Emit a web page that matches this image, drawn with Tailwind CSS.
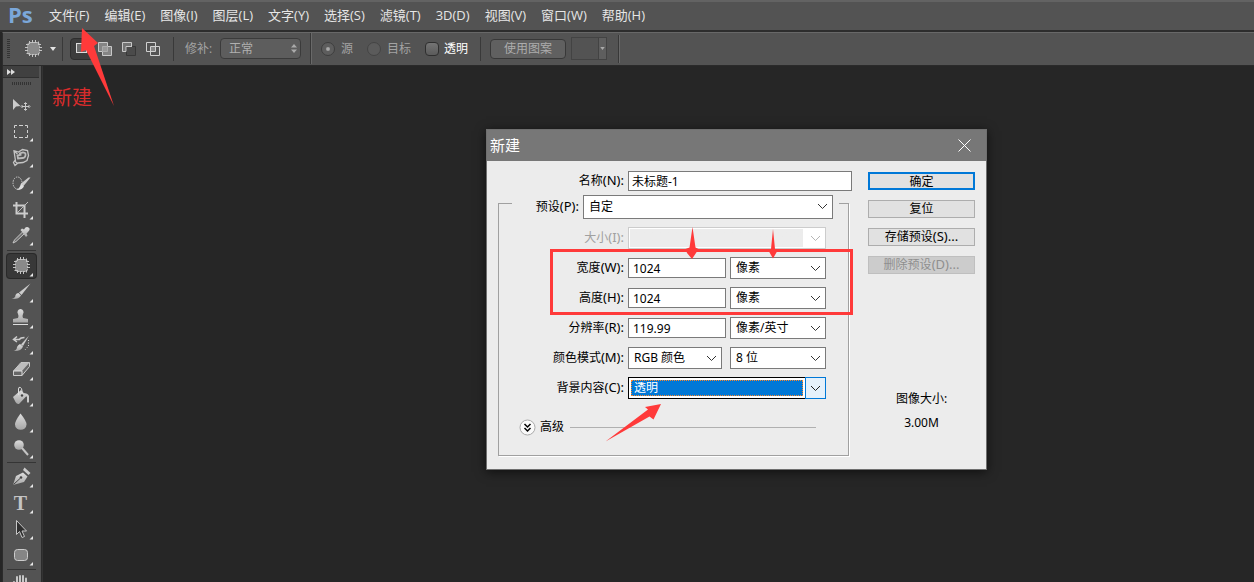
<!DOCTYPE html>
<html lang="zh-CN">
<head>
<meta charset="utf-8">
<title>Photoshop</title>
<script src="https://cdn.jsdelivr.net/npm/@tailwindcss/browser@4"></script>
</head>
<body class="flex h-screen flex-col overflow-hidden bg-[#262626] font-['Open_Sans','Noto_Sans_CJK_SC',sans-serif] text-xs text-[#e6e6e6]">
<svg class="absolute size-0" aria-hidden="true">
  <defs>
    <linearGradient id="metal" x1="0" y1="0" x2="0" y2="1"><stop offset="0" stop-color="#dedede"/><stop offset="1" stop-color="#a6a6a6"/></linearGradient>
    <symbol id="corner" viewBox="0 0 31 26"><path d="M27 20v3.500h-3.500z" fill="#e8e8e8"/></symbol>
    <symbol id="patch" viewBox="0 0 17 17">
      <rect x="2.500" y="2.500" width="12" height="12" rx="2.500" fill="#8a8a8a" stroke="#bdbdbd" stroke-dasharray="2 1"/>
      <path d="M4.500 1v3M7.500 0v3M10.500 0v3M13.500 1.500v2.500M4.500 13v3M7.500 14v3M10.500 14v3M13.500 13v2.500M1 4.500h3M0 7.500h3M0 10.500h3M1.500 13.500h2.500M13 4.500h3M14 7.500h3M14 10.500h3" stroke="#c4c4c4" fill="none"/>
    </symbol>
    <symbol id="chev" viewBox="0 0 11 7"><path d="M1 1l4.500 4.500L10 1" fill="none" stroke="currentColor"/></symbol>
  </defs>
</svg>

<nav class="flex h-8 shrink-0 items-center border-t-2 border-b-2 border-t-[#636363] border-b-[#2d2d2d] bg-[#535353] pb-px pl-2 text-[13px]">
  <span class="w-[41px] pb-1 font-['Open_Sans'] text-[22px] leading-6 font-bold text-[#7ba7d9]">Ps</span>
  <div class="flex gap-[15px] whitespace-nowrap">
    <button>文件(F)</button><button>编辑(E)</button><button>图像(I)</button><button>图层(L)</button><button>文字(Y)</button><button>选择(S)</button><button>滤镜(T)</button><button>3D(D)</button><button>视图(V)</button><button>窗口(W)</button><button>帮助(H)</button>
  </div>
</nav>

<div class="ml-[2px] flex h-[34px] shrink-0 items-center border-t border-b border-l border-t-[#686868] border-b-[#2a2a2a] border-l-[#2d2d2d] bg-[#535353] pb-px whitespace-nowrap text-[#a3a3a3]">
  <svg class="ml-1 h-5 w-[3px]" viewBox="0 0 3 20"><path d="M1.500 0v20" stroke="#333" stroke-width="3" stroke-dasharray="1 1"/></svg>
  <button class="ml-[15px] flex items-center gap-[8px]" aria-label="修补工具"><svg class="size-[17px]"><use href="#patch"/></svg><svg class="h-[4px] w-[6px]" viewBox="0 0 6 4"><path d="M0 0h6L3 4z" fill="#e4e4e4"/></svg></button>
  <span class="ml-[6px] h-6 w-px bg-[#393939]"></span>
  <div class="ml-[7px] flex items-center">
    <button aria-label="新选区" class="grid h-[22px] w-6 place-items-center rounded-sm border border-[#2e2e2e] bg-[#3c3c3c]"><svg class="size-[14px]" viewBox="0 0 14 14"><rect x="1.500" y="1.500" width="10" height="9" fill="#6b6b6b" stroke="#ddd"/></svg></button>
    <button aria-label="添加到选区" class="ml-[4px]"><svg class="size-[14px]" viewBox="0 0 14 14"><path d="M.5.5h9v4h4v9h-9v-4h-4z" fill="#858585" stroke="#c9c9c9"/><path d="M4.500 9.500v-5h5v5z" fill="#999" stroke="#aaa"/></svg></button>
    <button aria-label="从选区减去" class="ml-[10px]"><svg class="size-[14px]" viewBox="0 0 14 14"><path d="M4.500 4.500h9v9h-9z" fill="#4b4b4b" stroke="#383838"/><path d="M9.500 4V.5h-9v9H4v-5h6" fill="#747474" stroke="#c9c9c9"/></svg></button>
    <button aria-label="与选区交叉" class="ml-[10px]"><svg class="size-[14px]" viewBox="0 0 14 14"><path d="M.5.5h9v9h-9zM4.500 4.500h9v9h-9z" fill="none" stroke="#d0d0d0"/><path d="M5 5h4v4H5z" fill="#858585"/></svg></button>
  </div>
  <span class="ml-[13px] h-6 w-px bg-[#393939]"></span>
  <label for="mode" class="ml-[11px] w-[35px]">修补:</label>
  <div class="relative h-[21px] w-[81px]">
    <select id="mode" class="h-full w-full appearance-none rounded-sm border border-[#3b3b3b] bg-[#5d5d5d] pl-2 text-[#b0b0b0]"><option>正常</option></select>
    <svg class="pointer-events-none absolute top-[6px] right-1 h-[9px] w-[6px]" viewBox="0 0 6 9"><path d="M0 3.500L3 0l3 3.500zM0 5.500h6L3 9z" fill="#aaa"/></svg>
  </div>
  <span class="ml-[9px] h-[31px] w-[2px] border-l border-[#383838] bg-[#696969]"></span>
  <label class="ml-[9px] flex items-center gap-[6px]"><input type="radio" name="src" checked class="size-[14px] appearance-none rounded-full border border-[#3d3d3d] bg-[#5d5d5d] bg-radial from-[#aaa] from-15% to-[#5d5d5d] to-30%">源</label>
  <label class="ml-[14px] flex items-center gap-[6px]"><input type="radio" name="src" class="size-[14px] appearance-none rounded-full border border-[#444] bg-[#5b5b5b]">目标</label>
  <label class="ml-[14px] flex items-center gap-[5px] text-white"><input type="checkbox" class="size-[14px] appearance-none rounded-sm border border-[#2f2f2f] bg-linear-to-b from-[#747474] to-[#5b5b5b]">透明</label>
  <span class="ml-[12px] h-6 w-px bg-[#393939]"></span>
  <button class="ml-[9px] h-5 w-[76px] rounded-sm border border-[#383838] bg-[#606060] leading-none text-[#acacac]">使用图案</button>
  <button aria-label="图案" class="ml-[5px] flex h-[23px] w-[36px] justify-end border border-[#434343] bg-[#535353]"><span class="grid h-full w-[8px] place-items-center border-l border-[#434343] bg-[#5e5e5e]"><svg class="h-[3px] w-[5px]" viewBox="0 0 6 4"><path d="M0 0h6L3 4z" fill="#aaa"/></svg></span></button>
  <span class="ml-[11px] h-7 w-[2px] border-l border-[#383838] bg-[#696969]"></span>
</div>

<div class="flex min-h-0 flex-1">
  <aside class="ml-[2px] flex w-10 shrink-0 flex-col items-center overflow-hidden border-x border-[#2b2b2b] bg-[#535353] pr-[2px]">
    <button aria-label="展开" class="flex h-[12px] w-full shrink-0 items-center border-b border-[#303030] bg-[#404040] pl-1"><svg class="h-[6px] w-[8px]" viewBox="0 0 8 6"><path d="M0 0l4 3-4 3zM4 0l4 3-4 3z" fill="#ddd"/></svg></button>
    <svg class="mt-[4px] mb-[7px] h-[3px] w-[19px] shrink-0" viewBox="0 0 19 3"><path d="M0 1.500h19" stroke="#333" stroke-width="3" stroke-dasharray="1 1"/></svg>

    <button aria-label="移动"><svg class="block h-[26px] w-[31px]" viewBox="0 0 31 26"><path d="M7 7v11l3-3.500 4.500-.5z" fill="#ccc"/><path d="M16 14.500h7M19.500 11v7M18 12l1.500-1.500L21 12M18 17l1.500 1.500L21 17M16.500 13L15 14.500l1.500 1.500M22.500 13l1.500 1.500-1.500 1.500" fill="none" stroke="#c9c9c9"/></svg></button>
    <button aria-label="矩形选框"><svg class="block h-[26px] w-[31px]" viewBox="0 0 31 26"><path d="M8.500 10V7.500H11M13 7.500h4M19 7.500h2.500V10M21.500 12v3M21.500 17v2.500H19M17 19.500h-4M11 19.500H8.500V17M8.500 15v-3" fill="none" stroke="#d2d2d2"/><use href="#corner"/></svg></button>
    <button aria-label="磁性套索"><svg class="block h-[26px] w-[31px]" viewBox="0 0 31 26"><path d="M11.500 10L7.500 6.500l5 1.500 4-2.500 5 1 1 5-1.500 5-4 2-5 .5-3 2.500-1.500-3 1-1.500 2.500 2M8 7l1.500 10" fill="none" stroke="#c4c4c4" stroke-width="1.300"/><path d="M13 9.500l4-1.200q3 .3 2.500 3t-3 2.700l-4.500.5-.5-3 4-.8" fill="none" stroke="#bbb" stroke-width="1.800"/><use href="#corner"/></svg></button>
    <button aria-label="快速选择"><svg class="block h-[26px] w-[31px]" viewBox="0 0 31 26"><ellipse cx="11.500" cy="13" rx="4.500" ry="6" fill="none" stroke="#ccc" stroke-dasharray="1.500 1"/><path d="M24.500 7.500l-7 8.500-2.500-2.500 7.500-6z" fill="#ccc"/><path d="M15 13.500l3 2.500q-1.500 4.500-8 4 3.500-1 5-6.500z" fill="#dedede"/><use href="#corner"/></svg></button>
    <button aria-label="裁剪"><svg class="block h-[26px] w-[31px]" viewBox="0 0 31 26"><path d="M10.500 6v11.500H22M7 9.500h11.500V22" fill="none" stroke="#ccc" stroke-width="2"/><path d="M11 17L22 6" stroke="#bdbdbd"/><use href="#corner"/></svg></button>
    <button aria-label="吸管"><svg class="block h-[26px] w-[31px]" viewBox="0 0 31 26"><path d="M16.500 10l-8 8L7 21l3-1.500 8.500-8" fill="#6c6c6c" stroke="#c8c8c8"/><path d="M14.500 8l1.500-1.500 2 1Q20 4 22.500 5.500T22 10l-1.500 1.500 1 2L20 15z" fill="url(#metal)"/><use href="#corner"/></svg></button>
    <span class="my-[2px] h-px w-[29px] shrink-0 bg-[#353535]"></span>
    <button aria-label="修补" class="h-[26px] rounded-sm bg-[#383838] outline -outline-offset-1 outline-[#292929]"><svg class="block h-[26px] w-[31px]" viewBox="0 0 31 26"><use href="#patch" x="7" y="4" width="17" height="17"/><use href="#corner"/></svg></button>
    <button aria-label="画笔"><svg class="block h-[26px] w-[31px]" viewBox="0 0 31 26"><path d="M24.500 4.500L15.500 16 13 13.500z" fill="#ccc"/><path d="M12.500 14l2.500 2.500Q13 20.500 5.500 20q4-1 4-4 1-2 3-2z" fill="url(#metal)"/><use href="#corner"/></svg></button>
    <button aria-label="仿制图章"><svg class="block h-[26px] w-[31px]" viewBox="0 0 31 26"><path d="M14.500 4a3.200 3.200 0 0 1 2.500 5q-1 2 0 4l5 1v3.500H7V14l5-1q1-2 0-4a3.200 3.200 0 0 1 2.500-5z" fill="url(#metal)"/><path d="M7 19.500h15" stroke="#ddd"/><use href="#corner"/></svg></button>
    <button aria-label="历史记录画笔"><svg class="block h-[26px] w-[31px]" viewBox="0 0 31 26"><path d="M8 8.500h5.500q1-2 5-2M11 5.500L7.500 8.500 11 11" fill="none" stroke="#ccc" stroke-width="1.500"/><path d="M23 4.500L17 15l-2-1.500z" fill="#ccc"/><path d="M14 13l3 2.500q-2 5-9.500 4.500 3.500-1 3.500-4 1-2 3-3z" fill="url(#metal)"/><path d="M22.500 9v6l-4 4.500" fill="none" stroke="#ccc" stroke-dasharray="1 1.500"/><use href="#corner"/></svg></button>
    <button aria-label="橡皮擦"><svg class="block h-[26px] w-[31px]" viewBox="0 0 31 26"><path d="M7.500 14L15 5.500h8.500v4L16 18.500H7.500z" fill="#666" stroke="#ccc"/><path d="M7.500 14L15 5.500h8.500L16 14z" fill="#bdbdbd"/><path d="M7.500 14H16v4.500" fill="none" stroke="#ddd"/><use href="#corner"/></svg></button>
    <button aria-label="油漆桶"><svg class="block h-[26px] w-[31px]" viewBox="0 0 31 26"><path d="M7 14l8-7 5.500 6-7 7.500q-2 1.500-4-1.500z" fill="url(#metal)"/><path d="M12.500 12V6q0-2.500 2-1.500t1.500 8.500" fill="none" stroke="#ddd"/><path d="M17 10q5 0 6 3v6q-1 1.500-2 0v-5z" fill="#ccc"/><circle cx="16" cy="12.500" r="1.200" fill="#444"/><use href="#corner"/></svg></button>
    <button aria-label="模糊"><svg class="block h-[26px] w-[31px]" viewBox="0 0 31 26"><path d="M14.500 4.500Q9 12 9 15.500a5.500 5 0 0 0 11.500 0Q20.500 12 14.500 4.500z" fill="url(#metal)"/><use href="#corner"/></svg></button>
    <button aria-label="减淡"><svg class="block h-[26px] w-[31px]" viewBox="0 0 31 26"><circle cx="13" cy="10" r="4.800" fill="url(#metal)"/><path d="M16 13l6 7" stroke="#c4c4c4" stroke-width="2"/><use href="#corner"/></svg></button>
    <span class="my-[1px] h-px w-[29px] shrink-0 bg-[#353535]"></span>
    <button aria-label="钢笔"><svg class="block h-[26px] w-[31px]" viewBox="0 0 31 26"><path d="M7 21l3-9 7-3.500 4.500 4L18 18z" fill="url(#metal)"/><path d="M17 6l1.500-2.500 6 5.500L22.500 11z" fill="#ccc"/><path d="M7.500 20.500l6.500-6" stroke="#444"/><circle cx="15" cy="13.500" r="1.300" fill="#444"/><use href="#corner"/></svg></button>
    <button aria-label="横排文字" class="grid"><span class="col-start-1 row-start-1 pr-px text-center font-['Liberation_Serif'] text-xl leading-[26px] font-bold text-[#c4c4c4]">T</span><svg class="col-start-1 row-start-1 h-[26px] w-[31px]" viewBox="0 0 31 26"><use href="#corner"/></svg></button>
    <button aria-label="路径选择"><svg class="block h-[26px] w-[31px]" viewBox="0 0 31 26"><path d="M10.500 4.500v14l3-3 2.500 6 2.500-1-2.500-5.500h4.500z" fill="#2f2f2f" stroke="#c6c6c6"/><use href="#corner"/></svg></button>
    <button aria-label="圆角矩形"><svg class="block h-[26px] w-[31px]" viewBox="0 0 31 26"><rect x="8.500" y="7.500" width="13" height="11" rx="3" fill="#858585" stroke="#ccc"/><use href="#corner"/></svg></button>
    <span class="my-[1px] h-px w-[29px] shrink-0 bg-[#353535]"></span>
    <button aria-label="抓手"><svg class="block h-[26px] w-[31px]" viewBox="0 0 31 26"><path d="M11 14V6M14 13V5M17 13V5M20 14V7.500M8 11l4 5" stroke="#d4d4d4" stroke-width="1.800" stroke-linecap="round" fill="none"/><path d="M10 12h11v5l-3 5h-5l-4-7z" fill="#d0d0d0"/><use href="#corner"/></svg></button>
  </aside>
  <main class="flex-1 border-l border-[#333]"></main>
</div>

<!-- New document dialog -->
<section role="dialog" aria-labelledby="dlg-title" class="absolute top-[129px] left-[486px] w-[501px] border border-[#6f6f6f] bg-[#ececec] font-['Noto_Sans','Noto_Sans_CJK_SC',sans-serif] text-black shadow-[0_2px_10px_rgba(0,0,0,0.6)]">
  <header class="flex h-[31px] items-center justify-between bg-[#777] pr-[15px] pb-px pl-[3px] text-white">
    <h1 id="dlg-title" class="text-[15px]">新建</h1>
    <button aria-label="关闭"><svg class="size-[13px]" viewBox="0 0 13 13"><path d="M.5.5l12 12M12.500.5l-12 12" stroke="#fff"/></svg></button>
  </header>
  <form class="flex justify-between pt-[9px] pr-[11px] pb-[13px] pl-[11px]">
    <div class="w-[354px]">
      <div class="flex items-center">
        <label for="name" class="w-[130px] pr-1 text-right leading-5">名称<span class="text-[13px]">(N):</span></label>
        <input id="name" value="未标题-1" class="h-5 min-w-0 flex-1 border border-[#7a7a7a] bg-white px-[3px]">
      </div>
      <fieldset class="mt-1 mr-[3px] border border-[#a0a0a0] pb-[18px] shadow-[1px_1px_0_#fff]">
        <legend class="ml-[13px] h-4 w-[327px]">
          <div class="flex items-center">
            <label for="preset" class="w-[71px] pr-1 text-right">预设<span class="text-[13px]">(P):</span></label>
            <div class="relative h-6 w-[250px]"><select id="preset" class="h-full w-full appearance-none border border-[#7a7a7a] bg-white pl-[5px]"><option>自定</option></select><svg class="pointer-events-none absolute top-2 right-[5px] h-[7px] w-[11px] text-[#333]"><use href="#chev"/></svg></div>
          </div>
        </legend>
        <div class="mt-4 flex flex-col gap-2">
          <div class="flex h-[22px] items-center text-[#a0a0a0]">
            <label for="size" class="w-[129px] pr-1 text-right">大小<span class="text-[13px]">(I):</span></label>
            <div class="relative h-[22px] w-[198px]"><select id="size" disabled class="h-full w-full appearance-none border border-[#ccc] bg-linear-to-r from-[#ececec] from-[174px] to-white to-[174px] shadow-[inset_0_0_0_1px_#fff]"></select><svg class="pointer-events-none absolute top-2 right-[5px] h-[7px] w-[11px] text-[#b5b5b5]"><use href="#chev"/></svg></div>
          </div>
          <div class="flex h-[22px] items-center">
            <label for="w" class="w-[129px] pr-1 text-right">宽度<span class="text-[13px]">(W):</span></label>
            <input id="w" value="1024" class="h-5 w-[98px] border border-[#7a7a7a] bg-white px-1">
            <div class="relative ml-1 h-[22px] w-[96px]"><select aria-label="宽度单位" class="h-full w-full appearance-none border border-[#7a7a7a] bg-white pl-[5px]"><option>像素</option></select><svg class="pointer-events-none absolute top-2 right-[5px] h-[7px] w-[11px] text-[#333]"><use href="#chev"/></svg></div>
          </div>
          <div class="flex h-[22px] items-center">
            <label for="h" class="w-[129px] pr-1 text-right">高度<span class="text-[13px]">(H):</span></label>
            <input id="h" value="1024" class="h-5 w-[98px] border border-[#7a7a7a] bg-white px-1">
            <div class="relative ml-1 h-[22px] w-[96px]"><select aria-label="高度单位" class="h-full w-full appearance-none border border-[#7a7a7a] bg-white pl-[5px]"><option>像素</option></select><svg class="pointer-events-none absolute top-2 right-[5px] h-[7px] w-[11px] text-[#333]"><use href="#chev"/></svg></div>
          </div>
          <div class="flex h-[22px] items-center">
            <label for="res" class="w-[129px] pr-1 text-right">分辨率<span class="text-[13px]">(R):</span></label>
            <input id="res" value="119.99" class="h-5 w-[98px] border border-[#7a7a7a] bg-white px-1">
            <div class="relative ml-1 h-[22px] w-[96px]"><select aria-label="分辨率单位" class="h-full w-full appearance-none border border-[#7a7a7a] bg-white pl-[5px]"><option>像素/英寸</option></select><svg class="pointer-events-none absolute top-2 right-[5px] h-[7px] w-[11px] text-[#333]"><use href="#chev"/></svg></div>
          </div>
          <div class="flex h-[22px] items-center">
            <label for="cm" class="w-[129px] pr-1 text-right">颜色模式<span class="text-[13px]">(M):</span></label>
            <div class="relative h-[22px] w-[94px]"><select id="cm" class="h-full w-full appearance-none border border-[#7a7a7a] bg-white pl-[5px]"><option>RGB 颜色</option></select><svg class="pointer-events-none absolute top-2 right-[5px] h-[7px] w-[11px] text-[#333]"><use href="#chev"/></svg></div>
            <div class="relative ml-2 h-[22px] w-[96px]"><select aria-label="位深度" class="h-full w-full appearance-none border border-[#7a7a7a] bg-white pl-[5px]"><option>8 位</option></select><svg class="pointer-events-none absolute top-2 right-[5px] h-[7px] w-[11px] text-[#333]"><use href="#chev"/></svg></div>
          </div>
          <div class="flex h-[22px] items-center">
            <label for="bg" class="w-[129px] pr-1 text-right">背景内容<span class="text-[13px]">(C):</span></label>
            <div class="flex h-[22px] w-[177px] border border-r-0 border-black bg-white p-[2px]"><select id="bg" class="w-[172px] appearance-none border border-dotted border-[#ff8728] bg-[#0078d7] pl-[2px] leading-none text-white"><option>透明</option></select></div>
            <span class="grid h-[22px] w-[21px] place-items-center border border-[#0078d7] bg-[#e5f1fb]"><svg class="h-[7px] w-[11px] text-[#222]"><use href="#chev"/></svg></span>
          </div>
        </div>
        <div class="mt-[18px] mr-8 ml-5 flex h-5 items-center">
          <button type="button" class="flex items-center gap-1"><svg class="size-[17px]" viewBox="0 0 17 17"><circle cx="8.500" cy="8.500" r="7.500" fill="#fafafa" stroke="#aaa"/><path d="M5.500 5l3 3 3-3M5.500 9l3 3 3-3" fill="none" stroke="#000" stroke-width="1.500"/></svg>高级</button>
          <span class="ml-[6px] h-px flex-1 bg-[#b0b0b0]"></span>
        </div>
      </fieldset>
    </div>
    <div class="flex w-[107px] flex-col gap-[10px] pt-[2px]">
      <button class="h-[18px] border-2 border-[#0078d7] bg-[#e1e1e1] leading-4">确定</button>
      <button type="button" class="h-[18px] border border-[#adadad] bg-[#e1e1e1] leading-4">复位</button>
      <button type="button" class="h-[18px] border border-[#adadad] bg-[#e1e1e1] leading-4">存储预设<span class="text-[13px] leading-none">(S)...</span></button>
      <button type="button" disabled class="h-[18px] border border-[#bfbfbf] bg-[#ccc] leading-4 text-[#8f8f8f]">删除预设<span class="text-[13px] leading-none">(D)...</span></button>
      <div class="mt-[103px] text-center leading-6"><p>图像大小:</p><p>3.00M</p></div>
    </div>
  </form>
</section>

<!-- Tutorial annotations drawn over the application -->
<p class="absolute top-[84px] left-[52px] font-['Noto_Sans_CJK_SC'] text-xl leading-[26px] text-[#d82c2c]">新建</p>
<div class="pointer-events-none absolute top-[249px] left-[550px] h-[66px] w-[303px] border-[3px] border-[#ff3a3a]"></div>
<svg class="pointer-events-none absolute inset-0 size-full" fill="#ff3a3a" aria-hidden="true">
  <path d="M82 28L98 43 94 46 114 106 86 50 81 52z"/>
  <path d="M692.500 227l3 20.500 3 1.500-2.500 4-4 6-5-6-1.500-4 4-1.500z"/>
  <path d="M773 229l2 20 2 2.500-4 7-4-7 2-2.500z"/>
  <path d="M661 404l-16 3 3 2.500-42.500 32 44-25 4 3z"/>
</svg>
</body>
</html>
